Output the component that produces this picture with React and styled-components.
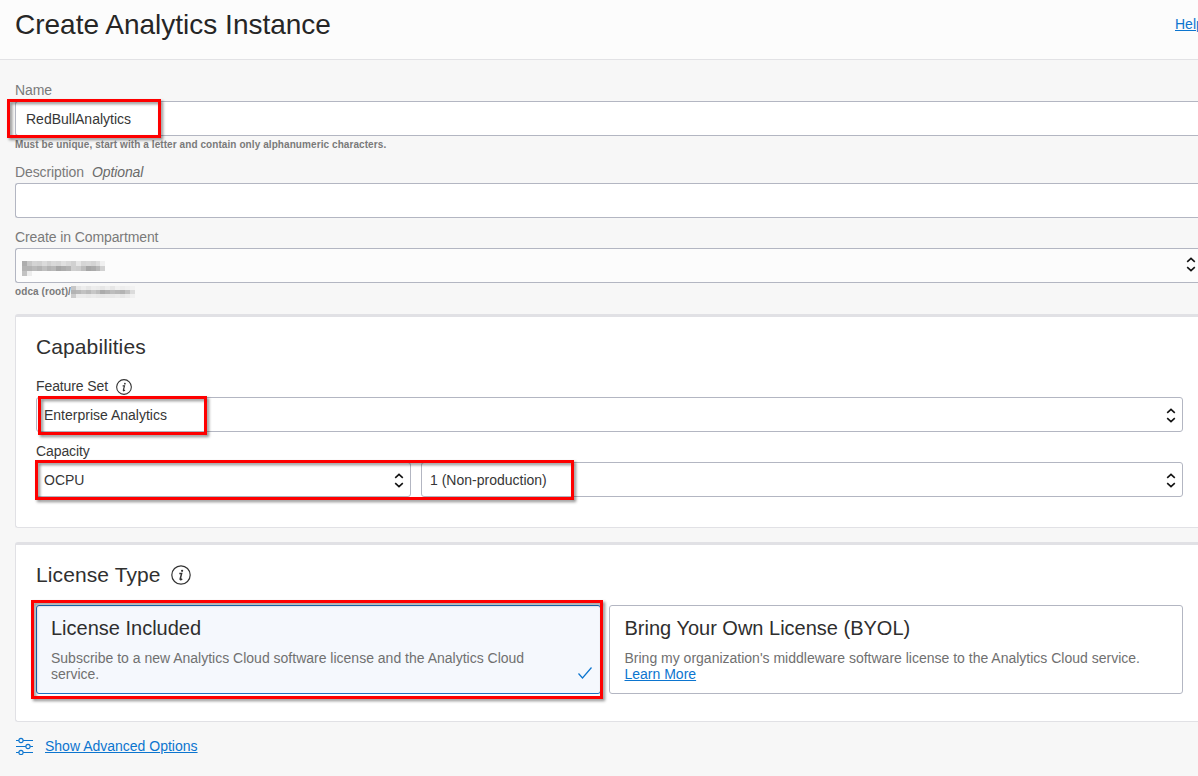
import React from "react";
import styled, { createGlobalStyle } from "styled-components";

const GlobalStyle = createGlobalStyle`
  *, *::before, *::after { box-sizing: border-box; }
  html, body { margin: 0; background: #f7f7f7; overflow: hidden; }
  body { font-family: "Liberation Sans", Arial, sans-serif; font-size: 14px; line-height: 16px; color: #363636; }
  h1, h2, h3, p { margin: 0; font-weight: 400; }
`;

const Page = styled.div`
  width: 100vw;
  height: 100vh;
  overflow: hidden;
`;

const Header = styled.header`
  display: flex;
  justify-content: space-between;
  height: 60px;
  padding: 9px 0 0 15px;
  background: #fcfcfc;
  border-bottom: 1px solid #e2e2e5;
`;

const Title = styled.h1`
  font-size: 28px;
  line-height: 32px;
  color: #262626;
`;

const Link = styled.a`
  color: #0c75cf;
  text-decoration: underline;
  text-underline-offset: 1px;
`;

const HelpSlot = styled.div`
  flex: none;
  width: 23px;
  padding-top: 7px;
  white-space: nowrap;
`;

const Main = styled.main`
  padding: 22px 0 0 15px;
`;

const Field = styled.div`
  position: relative;
  margin-bottom: ${(p) => p.$gap || 0}px;
`;

const Label = styled.div`
  display: flex;
  align-items: center;
  gap: 8px;
  height: 16px;
  margin-bottom: 3px;
  letter-spacing: -0.1px;
  color: ${(p) => (p.$dark ? "#383838" : "#7a7a7a")};
`;

const Optional = styled.em`
  color: #6a6a6a;
`;

const Control = styled.div`
  display: flex;
  align-items: center;
  justify-content: space-between;
  width: ${(p) => p.$width || "auto"};
  flex: ${(p) => p.$flex || "initial"};
  height: 35px;
  padding: 0 ${(p) => p.$right || 6}px 0 ${(p) => p.$left || 7}px;
  background: ${(p) => (p.$muted ? "#fcfcfc" : "#fff")};
  border: 1px solid #b3b6c2;
  border-right-width: ${(p) => (p.$open ? 0 : 1)}px;
  border-radius: ${(p) => (p.$open ? "3px 0 0 3px" : "3px")};
`;

const Hint = styled.div`
  display: flex;
  height: 16px;
  padding-top: 1px;
  font-size: 10px;
  font-weight: 700;
  letter-spacing: 0.08px;
  color: #7a7a7a;
`;

const Card = styled.section`
  height: ${(p) => p.$height}px;
  margin-bottom: 14px;
  padding: 18px 15px 0 20px;
  background: #fff;
  border: 1px solid #e1e1e5;
  border-top-width: 3px;
  border-right: 0;
  border-radius: 3px 0 0 3px;
`;

const CardTitle = styled.h2`
  display: flex;
  align-items: center;
  gap: 10px;
  height: 24px;
  margin-bottom: ${(p) => p.$gap}px;
  font-size: 21px;
  letter-spacing: 0.1px;
  color: #303030;
`;

const Row = styled.div`
  display: flex;
  gap: ${(p) => p.$gap}px;
`;

const Option = styled.div`
  position: relative;
  flex: none;
  width: ${(p) => p.$width}px;
  height: 89px;
  padding: 11px 14px 0 ${(p) => (p.$selected ? 14 : 14.5)}px;
  background: ${(p) => (p.$selected ? "#f5f8fd" : "#fff")};
  border: 1px solid ${(p) => (p.$selected ? "#1a73c5" : "#b3b6c2")};
  border-radius: 3px;
`;

const OptionTitle = styled.h3`
  font-size: 20px;
  line-height: 22px;
  color: #2e2e2e;
`;

const OptionText = styled.p`
  max-width: ${(p) => p.$max || 540}px;
  margin-top: 11px;
  color: #707070;
`;

const Check = styled.svg`
  position: absolute;
  right: 8px;
  bottom: 14px;
`;

const Frame = styled.div`
  position: absolute;
  z-index: 2;
  left: ${(p) => p.$x}px;
  top: ${(p) => p.$y}px;
  width: ${(p) => p.$w}px;
  height: ${(p) => p.$h}px;
  border: 3px solid #fe0000;
  filter: drop-shadow(2px 2px 1.5px rgba(0, 0, 0, 0.45));
  pointer-events: none;
`;

const Advanced = styled.div`
  display: flex;
  align-items: center;
  gap: 12px;
  height: 20px;
  padding-left: 1px;
`;

const StepperIcon = styled.svg`
  flex: none;
  margin-top: ${(p) => (p.$raised ? -2 : 2)}px;
`;

const InfoIcon = styled.svg`
  flex: none;
  margin-top: ${(p) => p.$drop || 0}px;
`;

const MosaicGrid = styled.svg`
  flex: none;
  margin-top: ${(p) => p.$drop}px;
`;

const Info = ({ size, drop }) => (
  <InfoIcon $drop={drop} width={size} height={size} viewBox="0 0 20 20" fill="none" stroke="#333">
    <circle cx="10" cy="10" r="9.2" strokeWidth={size > 16 ? 1.2 : 1.35} />
    <path d="M8.3 8.6h2.3L9.2 14q-.1.9.6.7.7-.2 1.3-1" strokeWidth="1.5" />
    <circle cx="11.1" cy="5.8" r="1.1" fill="#333" stroke="none" />
  </InfoIcon>
);

const Stepper = ({ raised }) => (
  <StepperIcon $raised={raised} width="10" height="17" viewBox="0 0 10 17" fill="none" stroke="#111" strokeWidth="1.6">
    <path d="M1.2 5.8 5 2.4 8.8 5.8M1.2 11.2 5 14.6 8.8 11.2" />
  </StepperIcon>
);

const Sliders = () => (
  <svg width="17" height="18" viewBox="0 0 17 18" fill="none" stroke="#0c75cf" strokeWidth="1.1">
    <path d="M0 3.5h2.9M7.1 3.5H17M0 9.5h9.9M14.1 9.5H17M0 15.5h2.9M7.1 15.5H17" />
    <circle cx="5" cy="3.5" r="2.1" />
    <circle cx="12" cy="9.5" r="2.1" />
    <circle cx="5" cy="15.5" r="2.1" />
  </svg>
);

const NAME_MOSAIC = [
  [0.68, 0.78, 0.83, 0.82, 0.86, 0.82, 0.85, 0.84, 0.88, 0.85, 0.82, 0.9, 0.84, 0.85, 0.83, 0.87, 0.94],
  [0.7, 0.7, 0.73, 0.7, 0.75, 0.7, 0.72, 0.65, 0.68, 0.7, 0.81, 0.8, 0.74, 0.65, 0.67, 0.72, 0.82],
  [0.76, 0.93],
];
const PATH_MOSAIC = [
  [0.78, 0.9, 0.93, 0.9, 0.93, 0.92, 0.9, 0.93, 0.9, 0.94, 0.93, 0.94, 0.95],
  [0.7, 0.72, 0.76, 0.73, 0.78, 0.74, 0.67, 0.7, 0.74, 0.72, 0.7, 0.76, 0.86],
  [0.8, 0.92, 0.92, 0.91, 0.92, 0.91, 0.9, 0.91, 0.91, 0.92, 0.9, 0.92, 0.94],
];

const Mosaic = ({ rows, cell, height, drop }) => (
  <MosaicGrid
    $drop={drop}
    width={rows[0].length * cell}
    height={rows.length * height}
    shapeRendering="crispEdges"
  >
    {rows.map((row, y) =>
      row.map((v, x) => (
        <rect
          key={`${x}-${y}`}
          x={x * cell}
          y={y * height}
          width={cell}
          height={height}
          fill={`rgb(${v * 255},${v * 255},${v * 255})`}
        />
      ))
    )}
  </MosaicGrid>
);

export default function App() {
  return (
    <Page>
      <GlobalStyle />
      <Header>
        <Title>Create Analytics Instance</Title>
        <HelpSlot>
          <Link>Help</Link>
        </HelpSlot>
      </Header>
      <Main>
        <Field $gap={12}>
          <Label>Name</Label>
          <Control $open $left={10}>RedBullAnalytics</Control>
          <Hint>Must be unique, start with a letter and contain only alphanumeric characters.</Hint>
          <Frame $x={-8} $y={17} $w={154} $h={39} />
        </Field>
        <Field $gap={11}>
          <Label>
            Description <Optional>Optional</Optional>
          </Label>
          <Control $open />
        </Field>
        <Field $gap={15}>
          <Label>Create in Compartment</Label>
          <Control $open $muted $left={6} $right={2}>
            <Mosaic rows={NAME_MOSAIC} cell={4.9} height={5} drop={6} />
            <Stepper raised />
          </Control>
          <Hint>
            odca (root)/
            <Mosaic rows={PATH_MOSAIC} cell={4.9} height={4} drop={2} />
          </Hint>
        </Field>
        <Card $height={214}>
          <CardTitle $gap={19}>Capabilities</CardTitle>
          <Field $gap={11}>
            <Label $dark>
              Feature Set <Info size={16} drop={2} />
            </Label>
            <Control>
              Enterprise Analytics
              <Stepper />
            </Control>
            <Frame $x={2} $y={18} $w={169} $h={39} />
          </Field>
          <Field>
            <Label $dark>Capacity</Label>
            <Row $gap={10}>
              <Control $width="375px">
                OCPU
                <Stepper />
              </Control>
              <Control $flex="1" $left={8}>
                1 (Non-production)
                <Stepper />
              </Control>
            </Row>
            <Frame $x={-1} $y={17} $w={539} $h={40} />
          </Field>
        </Card>
        <Card $height={180}>
          <CardTitle $gap={18}>
            License Type <Info size={20} />
          </CardTitle>
          <Field>
            <Row $gap={8}>
              <Option $selected $width={565}>
                <OptionTitle>License Included</OptionTitle>
                <OptionText $max={500}>
                  Subscribe to a new Analytics Cloud software license and the Analytics Cloud service.
                </OptionText>
                <Check width="14" height="12" viewBox="0 0 14 12" fill="none" stroke="#0c75cf" strokeWidth="1.2">
                  <path d="M.5 6.5 4.5 11 13.5.5" />
                </Check>
              </Option>
              <Option $width={574}>
                <OptionTitle>Bring Your Own License (BYOL)</OptionTitle>
                <OptionText>
                  Bring my organization's middleware software license to the Analytics Cloud service.{" "}
                  <Link>Learn More</Link>
                </OptionText>
              </Option>
            </Row>
            <Frame $x={-5} $y={-5} $w={572} $h={99} />
          </Field>
        </Card>
        <Advanced>
          <Sliders />
          <Link>Show Advanced Options</Link>
        </Advanced>
      </Main>
    </Page>
  );
}
